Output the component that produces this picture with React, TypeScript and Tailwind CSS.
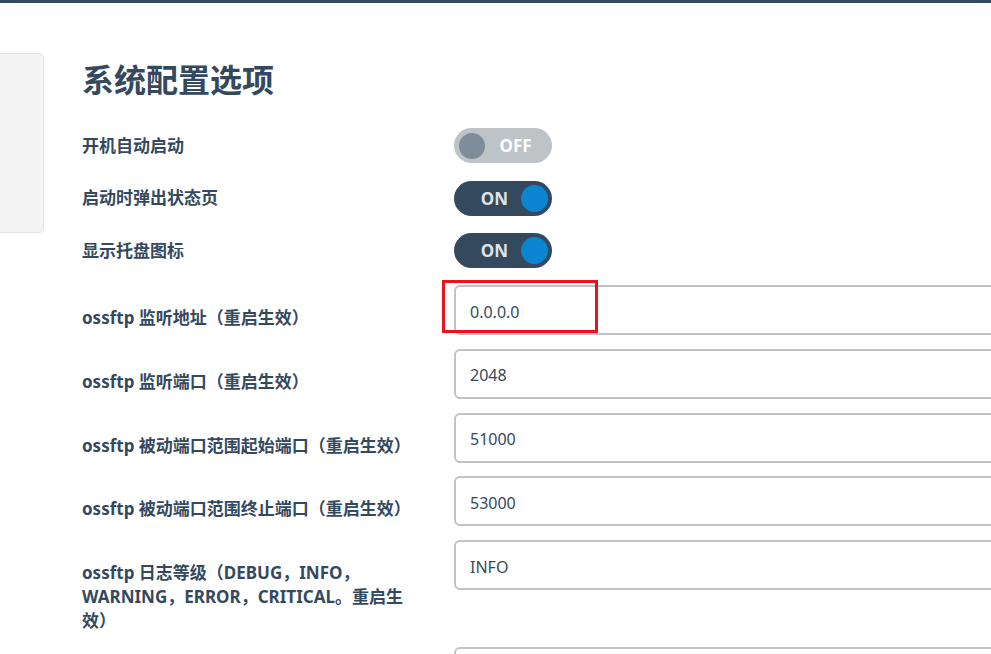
import React from 'react';

const font = "font-['Noto_Sans','Noto_Sans_CJK_SC',sans-serif]";

const Toggle = ({ on }: { on: boolean }) =>
    on ? (
        <div className="flex items-center w-[98px] h-[35px] rounded-full bg-[#34495e] pl-[14px]">
            <span className="flex-1 text-center text-[17px] font-bold text-[#dfe3e6] leading-none">ON</span>
            <span className="w-[27px] h-[27px] rounded-full bg-[#0a86d0] mr-[4px]" />
        </div>
    ) : (
        <div className="flex items-center w-[98px] h-[35px] rounded-full bg-[#bdc3c7] pr-[6px]">
            <span className="w-[26px] h-[26px] rounded-full bg-[#7f8c9a] ml-[5px]" />
            <span className="flex-1 text-center text-[17px] font-bold text-white leading-none">OFF</span>
        </div>
    );

const toggles = [
    { label: '开机自动启动', on: false },
    { label: '启动时弹出状态页', on: true },
    { label: '显示托盘图标', on: true },
];

const fields = [
    { label: 'ossftp 监听地址（重启生效）', value: '0.0.0.0' },
    { label: 'ossftp 监听端口（重启生效）', value: '2048' },
    { label: 'ossftp 被动端口范围起始端口（重启生效）', value: '51000' },
    { label: 'ossftp 被动端口范围终止端口（重启生效）', value: '53000' },
    { label: 'ossftp 日志等级（DEBUG，INFO，WARNING，ERROR，CRITICAL。重启生效）', value: 'INFO' },
    { label: '', value: '' },
];

const App: React.FC = () => {
    return (
        <div className={`relative w-[991px] h-[654px] overflow-hidden bg-white text-[#34495e] ${font}`}>
            <div className="h-[3px] bg-[#34495e] shadow-[0_3px_14px_rgba(0,0,0,0.07)]" />
            <div className="flex items-start pt-[50px]">
                <aside className="-ml-[30px] w-[74px] h-[180px] shrink-0 bg-[#f4f4f4] border border-[#e4e4e4] rounded-[5px]" />
                <main className="ml-[38px] flex-1">
                    <h1 className="mt-[8px] text-[32px] leading-[38px] font-bold">系统配置选项</h1>

                    <div className="mt-[29px] flex flex-col gap-[17.5px]">
                        {toggles.map((t) => (
                            <div key={t.label} className="flex items-center">
                                <div className="w-[372px] shrink-0 text-[17px] font-bold">{t.label}</div>
                                <Toggle on={t.on} />
                            </div>
                        ))}
                    </div>

                    <div className="mt-[17px] flex flex-col gap-[13.75px]">
                        {fields.map((f, i) => (
                            <div key={i} className="flex items-start">
                                <div className="w-[372px] shrink-0 pr-[38px] pt-[21px] text-[17px] leading-[24px] font-bold">
                                    {f.label}
                                </div>
                                <div className="w-[600px] h-[50px] shrink-0 flex items-center border-2 border-[#bdc3c7] rounded-[6px] px-[14px] pt-[3px] text-[16px]">
                                    {f.value}
                                </div>
                            </div>
                        ))}
                    </div>
                </main>
            </div>
            <div className="absolute left-[442px] top-[280px] w-[156px] h-[53px] border-[3px] border-[#e8131d]" />
        </div>
    );
};

export default App;
